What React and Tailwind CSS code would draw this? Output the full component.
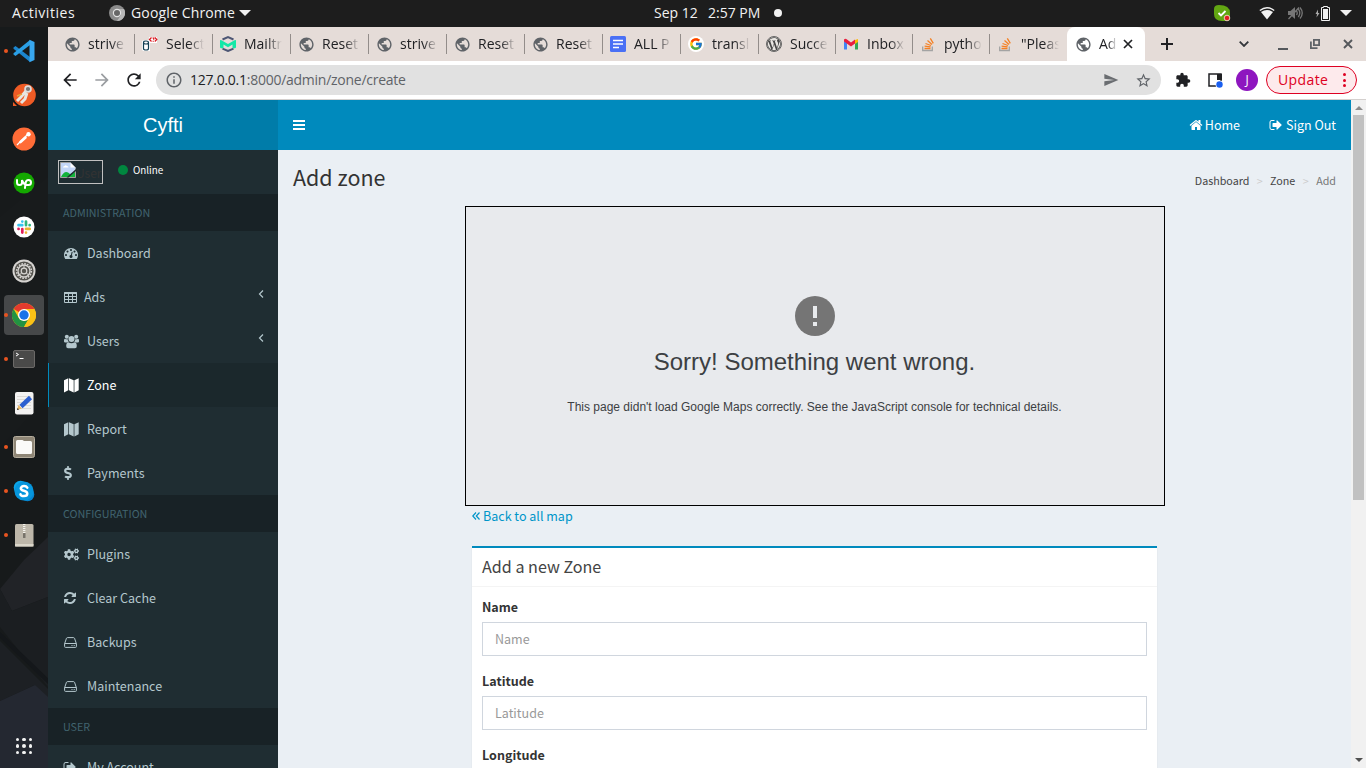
import React from "react";
import { FaDollarSign, FaCogs, FaWordpressSimple } from "react-icons/fa";
import { FcGoogle } from "react-icons/fc";
import { MdPublic, MdRefresh, MdSend, MdStarBorder, MdExtension, MdInfoOutline, MdArrowBack, MdArrowForward } from "react-icons/md";

const UI = "font-['Open_Sans','Noto_Sans',sans-serif]";
const SRC = "font-['Noto_Sans_CJK_SC',sans-serif]";

const FA = {
  home: "M1472 992v480q0 26-19 45t-45 19h-384v-384h-256v384h-384q-26 0-45-19t-19-45v-480q0-1 .5-3t.5-3l575-474 575 474q1 2 1 6zm223-69l-62 74q-8 9-21 11h-3q-13 0-21-7l-692-577-692 577q-12 8-24 7-13-2-21-11l-62-74q-8-10-7-23.5t11-21.5l719-599q32-26 76-26t76 26l244 204v-195q0-14 9-23t23-9h192q14 0 23 9t9 23v408l219 182q10 8 11 21.5t-7 23.5z",
  signout: "M704 1440q0 4 1 20t.5 26.5-3 23.5-10 19.5-20.5 6.5h-320q-119 0-203.5-84.5t-84.5-203.5v-704q0-119 84.5-203.5t203.5-84.5h320q13 0 22.5 9.5t9.5 22.5q0 4 1 20t.5 26.5-3 23.5-10 19.5-20.5 6.5h-320q-66 0-113 47t-47 113v704q0 66 47 113t113 47h312l11.5 1 11.5 3 8 5.5 7 9 2 13.5zm928-544q0 26-19 45l-544 544q-19 19-45 19t-45-19-19-45v-288h-448q-26 0-45-19t-19-45v-384q0-26 19-45t45-19h448v-288q0-26 19-45t45-19 45 19l544 544q19 19 19 45z",
  refresh: "M1639 1056q0 5-1 7-64 268-268 434.5t-478 166.5q-146 0-282.5-55t-243.5-157l-129 129q-19 19-45 19t-45-19-19-45v-448q0-26 19-45t45-19h448q26 0 45 19t19 45-19 45l-137 137q71 66 161 102t187 36q134 0 250-65t186-179q11-17 53-117 8-23 30-23h192q13 0 22.5 9.5t9.5 22.5zm25-800v448q0 26-19 45t-45 19h-448q-26 0-45-19t-19-45 19-45l138-138q-148-137-349-137-134 0-250 65t-186 179q-11 17-53 117-8 23-30 23h-199q-13 0-22.5-9.5t-9.5-22.5v-7q65-268 270-434.5t480-166.5q146 0 284 55.5t245 156.5l130-129q19-19 45-19t45 19 19 45z",
  gauge: "M384 1152q0-53-37.5-90.5t-90.5-37.5-90.5 37.5-37.5 90.5 37.5 90.5 90.5 37.5 90.5-37.5 37.5-90.5zm192-448q0-53-37.5-90.5t-90.5-37.5-90.5 37.5-37.5 90.5 37.5 90.5 90.5 37.5 90.5-37.5 37.5-90.5zm428 481l101-382q6-26-7.5-48.5t-38.5-29.5-48 6.5-30 39.5l-101 382q-60 5-107 43.5t-63 98.5q-20 77 20 146t117 89 146-20 89-117q16-60-6-117t-72-91zm660-33q0-53-37.5-90.5t-90.5-37.5-90.5 37.5-37.5 90.5 37.5 90.5 90.5 37.5 90.5-37.5 37.5-90.5zm-640-640q0-53-37.5-90.5t-90.5-37.5-90.5 37.5-37.5 90.5 37.5 90.5 90.5 37.5 90.5-37.5 37.5-90.5zm448 192q0-53-37.5-90.5t-90.5-37.5-90.5 37.5-37.5 90.5 37.5 90.5 90.5 37.5 90.5-37.5 37.5-90.5zm320 448q0 261-141 483-19 29-54 29h-1402q-35 0-54-29-141-221-141-483 0-182 71-348t191-286 286-191 348-71 348 71 286 191 191 286 71 348z",
};

function Fa({ name, className }) {
  return (
    <svg viewBox="0 0 1792 1792" className={className} fill="currentColor">
      <path d={FA[name]} />
    </svg>
  );
}

function SideIcon({ name }) {
  const box = "h-[15px] w-[15px]";
  if (name === "gauge") return <Fa name="gauge" className="h-[14px] w-[14px]" />;
  if (name === "refresh") return <Fa name="refresh" className="-ml-px h-[14px] w-[14px]" />;
  if (name === "signout") return <Fa name="signout" className="-ml-px h-[14px] w-[14px]" />;
  if (name === "dollar") return <FaDollarSign className="-ml-[3px] h-[14px] w-[14px]" />;
  if (name === "cogs") return <FaCogs className="h-[15px] w-[15px]" />;
  if (name === "table")
    return (
      <svg viewBox="0 0 15 15" className={box}>
        <path fill="none" stroke="currentColor" strokeWidth="1" d="M.5 2.500h12v10h-12zM.5 6.500h12M.5 9.500h12M4.500 2v11M8.500 2v11" />
        <path fill="currentColor" d="M0 3.200Q0 2 1.200 2h10.600Q13 2 13 3.200V4H0z" />
      </svg>
    );
  if (name === "users")
    return (
      <svg viewBox="0 0 15 15" className={box} fill="currentColor">
        <circle cx="2.800" cy="2.800" r="2" />
        <circle cx="12.200" cy="2.800" r="2" />
        <circle cx="7.500" cy="4.900" r="3" />
        <path d="M0 6.500Q0 5 1 4.800Q2.500 5.600 3.700 5.200Q3.800 7 4.800 7.900Q3.500 8 2.900 8.400H1.200Q0 8.400 0 7.400zM15 6.500Q15 5 14 4.800Q12.500 5.600 11.300 5.200Q11.200 7 10.200 7.900Q11.500 8 12.100 8.400h1.700Q15 8.400 15 7.400z" />
        <path d="M2.200 12Q2.200 8.200 4.500 8.200Q6 9.200 7.500 9.200T10.500 8.200Q12.800 8.200 12.800 12Q12.800 14.200 11 14.200H4Q2.200 14.200 2.200 12z" />
      </svg>
    );
  if (name === "map")
    return (
      <svg viewBox="0 0 15 15" className={box} fill="currentColor">
        <path d="M0 2.300L4.300.3v12L0 14.500zM5 .3l4.700 2v12.200L5 12.300zM10.400 2.300L14.700.3v12l-4.300 2.200z" />
      </svg>
    );
  return (
    <svg viewBox="0 0 15 15" className={box} fill="none" stroke="currentColor">
      <path d="M.6 8.500h11.800M.6 8.700L2.500 3.200Q2.800 2.600 3.500 2.600h6Q10.200 2.600 10.500 3.200l1.900 5.500v2.800q0 .9-.9.900h-10q-.9 0-.9-.9z" />
      <path d="M7.500 10.500h1M9.700 10.500h1" />
    </svg>
  );
}

function TabIcon({ kind }) {
  if (kind === "globe") return <MdPublic className="h-[17px] w-[17px] shrink-0 text-[#5f6368]" />;
  if (kind === "google")
    return (
      <span className="flex h-4 w-4 items-center justify-center rounded-full bg-white">
        <FcGoogle className="h-[14px] w-[14px]" />
      </span>
    );
  if (kind === "wp")
    return (
      <span className="flex h-4 w-4 items-center justify-center rounded-full border border-[#646464] bg-[#e9e6e2] text-[#464646]">
        <FaWordpressSimple className="h-[14px] w-[14px]" />
      </span>
    );
  return (
    <svg viewBox="0 0 16 16" className="h-4 w-4" fill="none">
      {kind === "db" && (
        <g>
          <path fill="#fff" d="M0 6Q0 4 3 4h4V1h8v6H8v8H1q-1-1-1-2z" />
          <path stroke="#123e52" strokeWidth="1.200" d="M1.500 6.500v6q0 1.500 2.500 1.500t2.500-1.500v-6Q6.500 5 4 5T1.500 6.500Q1.500 8 4 8t2.500-1.500" />
          <path stroke="#d8151d" strokeWidth="1.200" d="M9.500 1.500L7.500 3.500 9.500 5.500M12.800 1.500L14.800 3.500 12.800 5.500M10.500 2h1.200v1.700M11.200 4.700v1" />
        </g>
      )}
      {kind === "mail" && (
        <g>
          <path stroke="#4d5674" strokeWidth="2" d="M2.500 3.500L8 1.200l5.500 2.300M2.500 12.700L8 15l5.500-2.300" />
          <path fill="#12e8a7" d="M0 4.500Q0 3.700 1 4l7 4 7-4Q16 3.700 16 4.500V11q0 1.200-1.200 1.200H12.500V8.600L8 11.300 3.500 8.600V12.200H1.200Q0 12.200 0 11z" />
        </g>
      )}
      {kind === "doc" && (
        <g>
          <rect width="16" height="16" rx="1.500" fill="#4a70f5" />
          <path stroke="#fff" strokeWidth="1.600" d="M3 4.500h10M3 8h10M3 11.500h6" />
        </g>
      )}
      {kind === "gmail" && (
        <g>
          <path fill="#4285f4" d="M1 5v8.500h3V7z" />
          <path fill="#34a853" d="M12 7v6.500h3V5z" />
          <path fill="#fbbc04" d="M12 4l3-1v3l-3 2z" />
          <path fill="#e91e3e" d="M1 3.500Q2.500 2 4 3.500l4 3 4-3v4L8 10.500 1 5.500z" />
        </g>
      )}
      {kind === "so" && (
        <g>
          <path stroke="#a3a3a3" strokeWidth="1.300" d="M2.700 10.500v4h9.600v-4" />
          <path stroke="#f48024" strokeWidth="1.300" d="M4.500 12.500h6M4.600 10.200l6 .7M5.500 7.500l5.500 2M7.500 4.600l4.500 4M10.300 2.300l3 5" />
        </g>
      )}
    </svg>
  );
}

const TABS = [
  ["globe", "strive"], ["db", "Select"], ["mail", "Mailtr"], ["globe", "Reset"], ["globe", "strive"], ["globe", "Reset"],
  ["globe", "Reset"], ["doc", "ALL P"], ["google", "transl"], ["wp", "Succe"], ["gmail", "Inbox"], ["so", "pytho"], ["so", "\"Pleas"],
];

function DockArt({ kind }) {
  return (
    <svg viewBox="0 0 24 24" className="h-6 w-6" fill="none">
      {kind === "code" && (
        <g>
          <path fill="#1b86cf" d="M1.500 8.500L3.500 7 18 18v5L1.500 9.800z" />
          <path fill="#2a9fe5" d="M1.500 15.500L3.500 17 18 6V1L1.500 14.200z" />
          <path fill="#38a8f0" d="M17.500.8L22.500 3v18l-5 2.200z" />
        </g>
      )}
      {kind === "astronaut" && (
        <g>
          <path fill="#ef5b25" d="M1 23v-4l4 4z" />
          <circle cx="12.500" cy="12" r="11.300" fill="#ef5b25" />
          <path stroke="#e8e5e0" strokeWidth="3" d="M14 8L9 14l-4 4M15 10l-2 6-4 4" />
          <circle cx="16" cy="6" r="3.800" fill="#ddd" />
          <circle cx="16" cy="6" r="2.100" fill="#777" />
          <path stroke="#e6a43a" strokeWidth="1.500" d="M5 13l5-2" />
        </g>
      )}
      {kind === "postman" && (
        <g>
          <circle cx="12" cy="12" r="11.500" fill="#ff6c37" />
          <path stroke="#fff" strokeWidth="2.600" strokeLinecap="round" d="M8.500 15l5-4.500" />
          <path stroke="#fff" strokeWidth="1.300" d="M5 18l10-10" />
          <circle cx="16.500" cy="7.200" r="2.200" fill="#fff" />
        </g>
      )}
      {kind === "up" && (
        <g>
          <circle cx="12" cy="12" r="10.500" fill="#14a800" />
          <path stroke="#fff" strokeWidth="2" strokeLinecap="round" d="M5 9v2.500q0 2.500 2.500 2.500T10 11.500V9q1 3.500 3.800 5M13 17l.5-5q.5-3 3-3t2.500 2.500-2.500 2.500q-1.500 0-2.700-.7" />
        </g>
      )}
      {kind === "slack" && (
        <g>
          <circle cx="12" cy="12" r="10.500" fill="#fff" />
          <g strokeWidth="2.700" strokeLinecap="round">
            <path stroke="#36c5f0" d="M10.300 6.500v.1M6.500 10.200h3.800" />
            <path stroke="#2eb67d" d="M14 6.500v3.700M17.600 10.200h.1" />
            <path stroke="#e01e5a" d="M10.300 14v3.600M6.500 13.900h.1" />
            <path stroke="#ecb22e" d="M14 13.900h3.700M14 17.500v.1" />
          </g>
        </g>
      )}
      {kind === "settings" && (
        <g>
          <circle cx="12" cy="12" r="11.500" fill="#d6d4d1" />
          <circle cx="12" cy="12" r="9.600" fill="#55544f" />
          <circle cx="12" cy="12" r="7.300" stroke="#d6d4d1" strokeWidth="1.600" strokeDasharray="1.600 1.270" />
          <circle cx="12" cy="12" r="6" stroke="#d6d4d1" strokeWidth="1.300" />
          <circle cx="12" cy="12" r="2.800" stroke="#d6d4d1" strokeWidth="1.200" />
          <path stroke="#d6d4d1" d="M12 9.200V6M9.500 14l-2 2M14.500 14l2 2" />
        </g>
      )}
      {kind === "chrome" && (
        <g>
          <circle cx="12" cy="12" r="12" fill="#fbc116" />
          <path fill="#e33b2e" d="M12 12L1.600 6A12 12 0 0 1 22.400 6H12z" />
          <path fill="#229342" d="M12 24A12 12 0 0 1 1.600 6L6.800 15 12 18l4-1z" />
          <path fill="#fbc116" d="M12 24l5.200-9L12 6h10.400A12 12 0 0 1 12 24z" />
          <circle cx="12" cy="12" r="6" fill="#fff" />
          <circle cx="12" cy="12" r="4.700" fill="#1a73e8" />
        </g>
      )}
      {kind === "term" && (
        <g>
          <rect x="1.500" y="3.500" width="21" height="17" rx="1.500" fill="#4a4a49" stroke="#6b6967" />
          <path stroke="#fff" d="M4 6l2.500 1.500L4 9M7.500 11.500h4" />
        </g>
      )}
      {kind === "editor" && (
        <g>
          <rect x="3" y="1" width="18.500" height="22.500" rx="2" fill="#f3f2f1" />
          <path stroke="#dcdad7" d="M5 5.500h14M5 8.500h14M5 11.500h14M5 14.500h14M5 17.500h14" />
          <path stroke="#2c5fd0" strokeWidth="4.500" d="M18.500 6.500L9 15.500" />
          <path fill="#e8b765" d="M5 19l1.500-5 3.500 3.500z" />
          <path fill="#222" d="M5 19l.6-2 1.400 1.400z" />
        </g>
      )}
      {kind === "files" && (
        <g>
          <rect x="1.500" y="1.500" width="21" height="21" rx="2" fill="#8f8676" stroke="#b5ad9d" />
          <path fill="#fbfaf8" d="M4 6.500Q4 5 5.500 5h5l1.500 1h6.500Q20 6 20 7.500v10q0 1.500-1.500 1.500h-13Q4 19 4 17.500z" />
        </g>
      )}
      {kind === "skype" && (
        <g>
          <circle cx="8.500" cy="8.500" r="6.800" fill="#0ba6e8" />
          <circle cx="15.500" cy="15.500" r="6.800" fill="#0586d1" />
          <circle cx="12" cy="12" r="9.600" fill="#0696dd" />
          <path stroke="#fff" strokeWidth="2.500" strokeLinecap="round" d="M15.300 8.700Q14.300 7 12 7T8.800 9.200Q8.800 11 12 11.800t3.300 2.900Q15.300 17 12 17t-3.500-1.700" />
        </g>
      )}
      {kind === "zip" && (
        <g>
          <rect x="3" y="1" width="18.500" height="22.500" rx="1.500" fill="#bdb7aa" />
          <rect x="3" y="21" width="18.500" height="2.500" fill="#dad6ca" />
          <path stroke="#f4f2ec" strokeWidth="2.400" strokeDasharray="1 1" d="M12.200 1v10" />
          <rect x="11" y="10" width="2.500" height="5" rx=".5" fill="#77736a" />
        </g>
      )}
    </svg>
  );
}

const DOCK = [
  ["code", true], ["astronaut"], ["postman"], ["up"], ["slack"], ["settings"], ["chrome", true], ["term", true],
  ["editor"], ["files", true], ["skype", true], ["zip", true],
];

function Dock() {
  return (
    <aside className="relative flex w-12 shrink-0 flex-col items-center overflow-hidden bg-[#171a1b] pt-[2px]">
      <svg viewBox="0 0 48 741" className="absolute inset-0 h-full w-full">
        <path fill="#191c1e" d="M0 190l48-40v220L0 420z" opacity=".5" />
        <path fill="#212327" d="M24 533L48 510v60L12 584 0 562z" />
        <path fill="#1b1e21" d="M0 562l12 22 36-14v90L0 600z" />
        <path stroke="#14171a" strokeWidth="4" d="M-4 604l56 54" />
        <path fill="#1d2024" d="M0 614l48 48v14L35 658 0 674z" />
        <path fill="#242831" d="M0 674l35-16 13 12v71H0z" />
      </svg>
      {DOCK.map(([kind, running]) => (
        <div key={kind} className="relative flex h-11 w-12 shrink-0 items-center justify-center">
          {kind === "chrome" && <span className="absolute inset-x-1 inset-y-[2px] rounded-[4px] bg-[#464849]" />}
          {running && <span className="absolute left-1 top-5 h-[4px] w-[4px] rounded-full bg-[#e95420]" />}
          <span className="relative"><DockArt kind={kind} /></span>
        </div>
      ))}
      <div className="relative mb-[14px] mt-auto grid grid-cols-3 gap-[3px]">
        {Array.from({ length: 9 }, (_, i) => (
          <span key={i} className="h-[3.500px] w-[3.500px] rounded-full bg-[#f2f2f2]" />
        ))}
      </div>
    </aside>
  );
}

function TopBar() {
  return (
    <header className={`${UI} flex h-[27px] shrink-0 items-center bg-[#1d1d1d] pb-px text-[14px] leading-[26px] text-[#f2f2f2]`}>
      <div className="w-[109px] pl-3 tracking-[0.550px]">Activities</div>
      <svg viewBox="0 0 16 16" className="h-4 w-4" fill="none">
        <circle cx="8" cy="8" r="8" fill="#8b8b8b" />
        <path d="M8 4h7A8 8 0 0 1 8 16l4-6z" fill="#b5b5b5" />
        <circle cx="8" cy="8" r="3.600" fill="#666" stroke="#e2e2e2" strokeWidth="1.200" />
      </svg>
      <div className="w-[109px] pl-[6px] tracking-[0.15px]">
        <span className="whitespace-nowrap">Google Chrome</span>
      </div>
      <svg viewBox="0 0 12 6" className="ml-[5px] h-[6px] w-3"><path fill="#f2f2f2" d="M0 0h12L6 6z" /></svg>
      <div className="ml-[403px] w-[45px] whitespace-nowrap">Sep 12</div>
      <div className="ml-[9px] w-[53px] whitespace-nowrap">2:57 PM</div>
      <span className="ml-[13px] h-2 w-2 rounded-full bg-[#f2f2f2]" />
      <div className="ml-auto flex items-center pr-[14px]">
        <svg viewBox="0 0 18 17" className="mr-[27px] h-[17px] w-[18px]">
          <path fill="#62a612" d="M5 0Q16 0 16 8v6q0 2-4 2H8Q0 16 0 9V4q0-4 5-4z" />
          <path fill="none" stroke="#fff" strokeWidth="1.800" d="M4.500 8l2.500 2.500L11.500 6" />
          <circle cx="13" cy="13" r="2.800" fill="#e02020" stroke="#f8e8e0" strokeWidth=".8" />
        </svg>
        <svg viewBox="0 0 16 13" className="h-[13px] w-4">
          <path fill="none" stroke="#f2f2f2" strokeWidth="1.300" d="M.8 3.500Q8-2 15.200 3.500" />
          <path fill="#f2f2f2" d="M2 5Q8 1 14 5L8 12.500z" />
        </svg>
        <svg viewBox="0 0 16 16" className="ml-[12px] h-4 w-4" fill="none" stroke="#777">
          <path fill="#777" stroke="none" d="M1 6h2.500L8 2v12L3.500 10H1z" />
          <path strokeWidth="1.300" d="M9.500 6q1.500 2 0 4M11.300 4q3 4 0 8M13 2.500q4.500 5.500 0 11M1.500 14L12 2.500" />
        </svg>
        <svg viewBox="0 0 16 17" className="ml-[12px] h-[17px] w-4" fill="none">
          <path fill="#aaa" d="M3 4.500L.5 9H2L1.500 12.500 4.500 8H3z" />
          <path fill="#f2f2f2" d="M8 4h5v10H8z" />
          <path stroke="#f2f2f2" d="M6.500 2.500h2v-1h4v1h2v13h-8z" />
        </svg>
        <svg viewBox="0 0 12 6" className="ml-[9px] h-[6px] w-3"><path fill="#f2f2f2" d="M0 0h12L6 6z" /></svg>
      </div>
    </header>
  );
}

function TabStrip() {
  return (
    <div className={`${UI} flex h-[34px] shrink-0 items-center bg-[#e5dcd8] pl-[9px] text-[14px] text-[#202124]`}>
      {TABS.map(([kind, title], i) => (
        <div key={i} className={`flex h-5 shrink-0 items-center pl-[7px] ${i < 12 ? "border-r border-[#938d8a]" : ""} ${i < 9 ? "w-[78px]" : "w-[77px]"}`}>
          <span className="flex w-4 shrink-0 justify-center"><TabIcon kind={kind} /></span>
          <span className="ml-2 w-[38px] overflow-hidden whitespace-nowrap leading-5 [mask-image:linear-gradient(to_right,black_60%,transparent)]">{title}</span>
        </div>
      ))}
      <div className="flex h-[34px] w-[78px] shrink-0 items-center rounded-t-lg bg-white pl-2">
        <MdPublic className="h-[17px] w-[17px] shrink-0 text-[#5f6368]" />
        <span className="ml-[7px] w-[18px] overflow-hidden whitespace-nowrap leading-5 [mask-image:linear-gradient(to_right,black_50%,transparent)]">Ad</span>
        <svg viewBox="0 0 10 10" className="ml-[6px] h-[10px] w-[10px]"><path stroke="#202124" strokeWidth="1.700" d="M1 1l8 8M9 1L1 9" /></svg>
      </div>
      <svg viewBox="0 0 12 12" className="ml-4 h-3 w-3"><path stroke="#202124" strokeWidth="2" d="M6 0v12M0 6h12" /></svg>
      <div className="ml-auto flex items-center pr-[13px]">
        <svg viewBox="0 0 10 6" className="mr-[29px] h-[6px] w-[10px]" fill="none"><path stroke="#33363a" strokeWidth="1.800" d="M.7.7L5 5 9.300.7" /></svg>
        <span className="mr-[22px] mt-[9px] h-[2px] w-[10px] bg-[#55585c]" />
        <svg viewBox="0 0 10 10" className="mr-[23px] h-[10px] w-[10px]" fill="none">
          <path stroke="#5f6368" strokeWidth="1.800" d="M3.900.9h5.200v5.200H3.900zM.9 2.500v6.600H7.500" />
        </svg>
        <svg viewBox="0 0 10 10" className="h-[10px] w-[10px]"><path stroke="#55585c" strokeWidth="1.900" d="M1 1l8 8M9 1L1 9" /></svg>
      </div>
    </div>
  );
}

function Toolbar() {
  return (
    <div className={`${UI} flex h-[39px] shrink-0 items-center border-b border-[#d4d0ce] bg-white pl-3`}>
      <MdArrowBack className="h-5 w-5 text-[#202124]" />
      <MdArrowForward className="ml-3 h-5 w-5 text-[#9a9da1]" />
      <MdRefresh className="ml-3 h-5 w-5 text-[#202124]" />
      <div className="ml-3 flex h-[30px] w-[1005px] items-center rounded-full bg-[#e1e1e1] pl-[9px] pr-[9px]">
        <MdInfoOutline className="h-[18px] w-[18px] text-[#5f6368]" />
        <span className="ml-[7px] whitespace-nowrap text-[14px] leading-[30px] tracking-[-0.260px] text-[#5f6368]">
          <span className="text-[#202124]">127.0.0.1</span>:8000/admin/zone/create
        </span>
        <MdSend className="ml-auto h-4 w-4 text-[#6a6d71]" />
        <MdStarBorder className="ml-[16px] h-[17px] w-[17px] text-[#5f6368]" />
      </div>
      <MdExtension className="ml-[14px] h-[16px] w-[16px] text-[#202124]" />
      <svg viewBox="0 0 15 15" className="ml-[17px] h-[15px] w-[15px]">
        <path fill="none" stroke="#202124" strokeWidth="1.500" d="M1 1h12v12H1z" />
        <path fill="#202124" d="M9 1h5v6H9z" />
        <circle cx="11.500" cy="11.500" r="4" fill="#fff" />
        <circle cx="11.500" cy="11.500" r="3.200" fill="#1a5ff0" />
      </svg>
      <span className="ml-[13px] flex h-[22px] w-[22px] items-center justify-center rounded-full bg-[#8e16bf] text-[12px] text-white">J</span>
      <div className="ml-2 flex h-[28px] w-[91px] items-center rounded-full border border-[#de0022] bg-[#fdeaec] pl-[11px] text-[14px] text-[#de0022]">
        <span className="w-[52px] leading-none tracking-[0.400px]">Update</span>
        <span className="ml-[13px] flex flex-col gap-[2.500px]">
          <span className="h-[3px] w-[3px] rounded-full bg-[#de0022]" />
          <span className="h-[3px] w-[3px] rounded-full bg-[#de0022]" />
          <span className="h-[3px] w-[3px] rounded-full bg-[#de0022]" />
        </span>
      </div>
    </div>
  );
}

function SideHeading({ children }) {
  return <div className="h-[37px] shrink-0 bg-[#182226] pl-[15px] text-[10.740px] leading-[37px] text-[#41646f]">{children}</div>;
}

function SideItem({ icon, label, active, chevron, tight }) {
  return (
    <a className={`flex h-11 shrink-0 items-center border-l pl-[15px] pr-[14px] ${active ? "border-[#008abd] bg-[#1b282c] text-white" : "border-transparent text-[#b4c7cd]"}`}>
      <span className={`flex shrink-0 items-center ${tight ? "w-5" : "w-[23px]"}`}><SideIcon name={icon} /></span>
      <span className="text-[12.530px] leading-5">{label}</span>
      {chevron && (
        <svg viewBox="0 0 6 8" className="-mt-[6px] ml-auto h-2 w-[6px]" fill="none"><path stroke="currentColor" strokeWidth="1.200" d="M5 .5L1.500 4 5 7.500" /></svg>
      )}
    </a>
  );
}

function Sidebar() {
  return (
    <nav className="flex w-[230px] shrink-0 flex-col bg-[#1f2d32]">
      <div className="flex h-11 shrink-0 items-start pl-[10px] pt-[10px]">
        <div className="flex h-6 w-[45px] shrink-0 items-start overflow-hidden border border-[#c0c0c0] pl-px pt-px text-[12px] leading-[22px] text-[#333]">
          <svg viewBox="0 0 16 16" className="h-4 w-4 shrink-0">
            <path fill="#c3d6f8" stroke="#a0a0a0" d="M.5.500h10l5 5v10H.5z" />
            <path fill="#fff" d="M10.500 1v4.500H15zM3 5.500Q3 4 4.500 4 5.500 2.500 7 4q1.500 0 1.500 1.500z" />
            <path fill="#12b33b" d="M1 15q4-8 9-3l5-2v5z" />
            <path fill="#1f2d32" d="M8.500 15.500L16 9V7L6.500 15.500z" />
          </svg>
          <span className="whitespace-nowrap">User</span>
        </div>
        <span className="ml-[15px] mt-[5px] h-[10px] w-[10px] rounded-full bg-[#00873f]" />
        <span className="ml-[5px] text-[9.840px] leading-5 text-white">Online</span>
      </div>
      <SideHeading>ADMINISTRATION</SideHeading>
      <SideItem icon="gauge" label="Dashboard" />
      <SideItem icon="table" label="Ads" chevron tight />
      <SideItem icon="users" label="Users" chevron />
      <SideItem icon="map" label="Zone" active />
      <SideItem icon="map" label="Report" />
      <SideItem icon="dollar" label="Payments" />
      <SideHeading>CONFIGURATION</SideHeading>
      <SideItem icon="cogs" label="Plugins" />
      <SideItem icon="refresh" label="Clear Cache" />
      <SideItem icon="hdd" label="Backups" />
      <SideItem icon="hdd" label="Maintenance" />
      <SideHeading>USER</SideHeading>
      <SideItem icon="signout" label="My Account" />
    </nav>
  );
}

function Field({ label }) {
  return (
    <div className="mb-[15px] shrink-0 text-[12.530px]">
      <label className="mb-[5px] block h-5 font-bold leading-5 text-[#333]">{label}</label>
      <div className="h-[34px] border border-[#d0d6de] bg-white px-3 leading-8 text-[#999]">{label}</div>
    </div>
  );
}

function Content() {
  return (
    <main className="flex min-w-0 flex-1 flex-col overflow-hidden bg-[#eaeff4]">
      <div className="flex h-14 shrink-0 justify-between px-[15px]">
        <h1 className="pt-[14px] text-[21.480px] leading-[26px] text-[#333]">Add zone</h1>
        <div className="flex pt-[21px] text-[10.740px] leading-5 text-[#444]">
          <span>Dashboard</span>
          <span className="w-[20.500px] text-center text-[#ccc]">&gt;</span>
          <span>Zone</span>
          <span className="w-[21px] text-center text-[#ccc]">&gt;</span>
          <span className="text-[#777]">Add</span>
        </div>
      </div>
      <section className="ml-[187px] flex h-[300px] w-[700px] shrink-0 flex-col items-center border border-black bg-[#e8eaed] pt-[89px] font-['Liberation_Sans',sans-serif] text-[#3c4043]">
        <svg viewBox="0 0 40 40" className="h-10 w-10">
          <circle cx="20" cy="20" r="20" fill="#757575" />
          <path fill="#e8eaed" d="M18 10h4v12h-4zM18 26h4v4h-4z" />
        </svg>
        <div className="mt-[10px] pr-px text-[24px] leading-8">Sorry! Something went wrong.</div>
        <div className="mt-[21px] pr-px text-[12px] leading-4">This page didn't load Google Maps correctly. See the JavaScript console for technical details.</div>
      </section>
      <section className="ml-[194px] flex w-[685px] shrink-0 flex-col">
        <a className="flex h-5 items-center text-[12.530px] leading-5 text-[#0095c9]">
          <svg viewBox="0 0 8 8" className="mr-[3px] h-2 w-2" fill="none"><path stroke="currentColor" strokeWidth="1.200" d="M4 .5L.8 4 4 7.500M7.500.500L4.300 4l3.200 3.500" /></svg>
          Back to all map
        </a>
        <div className="mt-5 border-t-2 border-[#008abd] bg-white shadow-[0_1px_1px_rgba(0,0,0,0.1)]">
          <div className="h-[39px] border-b border-[#f4f4f4] px-[10px] text-[16.110px] leading-[37px] text-[#444]">Add a new Zone</div>
          <div className="p-[10px]">
            <Field label="Name" />
            <Field label="Latitude" />
            <Field label="Longitude" />
          </div>
        </div>
      </section>
    </main>
  );
}

export default function App() {
  return (
    <div className="flex h-[768px] w-[1366px] flex-col overflow-hidden">
      <TopBar />
      <div className="flex min-h-0 flex-1">
        <Dock />
        <div className="flex min-w-0 flex-1 flex-col">
          <TabStrip />
          <Toolbar />
          <div className={`${SRC} flex min-h-0 flex-1`}>
            <div className="flex min-w-0 flex-1 flex-col">
              <header className="flex h-[50px] shrink-0 text-white">
                <div className="flex w-[230px] items-center justify-center bg-[#007ca9] font-['Liberation_Sans',sans-serif] text-[20px]">Cyfti</div>
                <div className="flex flex-1 items-center bg-[#008abd] px-[15px] text-[12.530px] leading-5">
                  <svg viewBox="0 0 12 10" className="h-[10px] w-3"><path stroke="#fff" strokeWidth="2" d="M0 1h12M0 5h12M0 9h12" /></svg>
                  <Fa name="home" className="ml-auto mr-[2px] h-[14px] w-[14px]" />
                  Home
                  <Fa name="signout" className="ml-[29px] mr-[3px] h-[14px] w-[14px]" />
                  Sign Out
                </div>
              </header>
              <div className="flex min-h-0 flex-1">
                <Sidebar />
                <Content />
              </div>
            </div>
            <div className="flex w-[15px] shrink-0 flex-col items-center justify-between bg-[#f1f1f1] py-[6px]">
              <div className="flex flex-col items-center">
                <svg viewBox="0 0 8 4" className="h-1 w-2"><path fill="#8b8b8b" d="M0 4h8L4 0z" /></svg>
                <div className="mt-[5px] h-[385px] w-[11px] bg-[#c1c1c1]" />
              </div>
              <svg viewBox="0 0 8 4" className="h-1 w-2"><path fill="#505050" d="M0 0h8L4 4z" /></svg>
            </div>
          </div>
        </div>
      </div>
    </div>
  );
}
